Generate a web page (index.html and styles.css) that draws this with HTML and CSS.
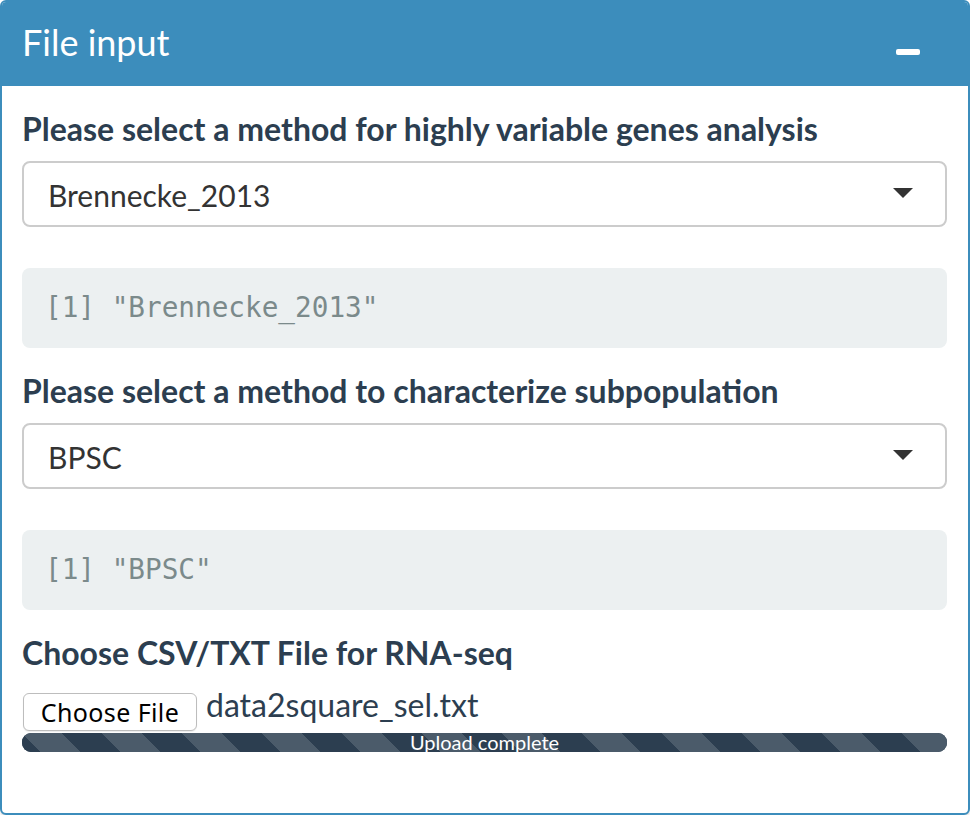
FILE: index.html
```html
<!DOCTYPE html>
<html lang="en">
<head>
<meta charset="utf-8">
<title>File input</title>
<link rel="stylesheet" href="styles.css">
</head>
<body>
<div class="box">
  <div class="box-header">
    <h3 class="box-title">File input</h3>
    <span class="collapse-btn" aria-label="collapse"></span>
  </div>
  <div class="box-body">
    <div class="form-group">
      <label class="control-label">Please select a method for highly variable genes analysis</label>
      <div class="select">
        <span class="select-value">Brennecke_2013</span>
        <span class="caret"></span>
      </div>
    </div>
    <pre class="output">[1] "Brennecke_2013"</pre>

    <div class="form-group">
      <label class="control-label">Please select a method to characterize subpopulation</label>
      <div class="select">
        <span class="select-value">BPSC</span>
        <span class="caret"></span>
      </div>
    </div>
    <pre class="output">[1] "BPSC"</pre>

    <div class="form-group file-group">
      <label class="control-label">Choose CSV/TXT File for RNA-seq</label>
      <div class="file-row">
        <span class="file-btn">Choose File</span>
        <span class="file-name">data2square_sel.txt</span>
      </div>
      <div class="progress">
        <div class="progress-bar">Upload complete</div>
      </div>
    </div>
  </div>
</div>
</body>
</html>
```

FILE: styles.css
```css
html, body {
  margin: 0;
  padding: 0;
  background: #ffffff;
}

body {
  font-family: Lato, "Open Sans", "Liberation Sans", sans-serif;
  color: #2c3e50;
}

.box {
  width: 970px;
  height: 815px;
  box-sizing: border-box;
  border: 2px solid #3c8dbc;
  border-radius: 6px;
  background: #ffffff;
  box-shadow: 0 2px 2px rgba(0, 0, 0, 0.12);
  overflow: hidden;
}

.box-header {
  display: flex;
  justify-content: space-between;
  align-items: flex-start;
  height: 84px;
  box-sizing: border-box;
  padding: 20px 48px 0 20px;
  background: #3c8dbc;
  color: #ffffff;
}

.box-title {
  margin: 0;
  font-size: 36px;
  font-weight: 400;
  line-height: 40px;
  color: #ffffff;
}

.collapse-btn {
  display: block;
  width: 24px;
  height: 6px;
  margin-top: 27px;
  border-radius: 2px;
  background: #ffffff;
}

.box-body {
  padding: 20px 21px 20px 20px;
}

.control-label {
  display: block;
  font-size: 32px;
  font-weight: 700;
  line-height: 43px;
  margin-top: 1px;
  color: #2c3e50;
}

.select {
  position: relative;
  height: 66px;
  box-sizing: border-box;
  margin-top: 11px;
  border: 2px solid #cccccc;
  border-radius: 8px;
  background: #ffffff;
  display: flex;
  align-items: center;
  padding: 0 24px;
}

.select-value {
  font-size: 30px;
  line-height: 34px;
  color: #333333;
  margin-top: 1px;
}

.caret {
  position: absolute;
  right: 32px;
  top: 25px;
  width: 0;
  height: 0;
  border-style: solid;
  border-width: 10px 10px 0 10px;
  border-color: #333333 transparent transparent transparent;
}

.output {
  margin: 41px 0 21px 0;
  height: 80px;
  box-sizing: border-box;
  padding: 0 23px;
  border-radius: 8px;
  background: #ecf0f1;
  color: #7b8a8b;
  font-family: "DejaVu Sans Mono", "Liberation Mono", monospace;
  font-size: 27.7px;
  line-height: 80px;
  white-space: pre;
}

.file-group {
  margin-top: 1px;
}

.file-group .control-label {
  margin-bottom: 13px;
}

.file-row {
  display: flex;
  align-items: flex-start;
  height: 44px;
}

.file-btn {
  display: flex;
  align-items: center;
  justify-content: center;
  box-sizing: border-box;
  width: 174px;
  height: 38px;
  margin: 6px 0 0 1px;
  border: 1px solid #bdbdbd;
  border-radius: 6px;
  background: #ffffff;
  box-shadow: 0 1px 1px rgba(0, 0, 0, 0.08);
  color: #000000;
  font-family: "Noto Sans", "Liberation Sans", sans-serif;
  font-size: 25px;
  letter-spacing: 0.4px;
  line-height: 30px;
}

.file-name {
  margin-left: 9px;
  font-size: 32px;
  line-height: 36px;
  color: #2c3e50;
}

.progress {
  margin-top: 2px;
  height: 19px;
  border-radius: 9px;
  background: #2c3e50;
}

.progress-bar {
  height: 19px;
  border-radius: 9px;
  background-color: #2c3e50;
  background-image: linear-gradient(45deg,
    rgba(255, 255, 255, 0.15) 25%, transparent 25%, transparent 50%,
    rgba(255, 255, 255, 0.15) 50%, rgba(255, 255, 255, 0.15) 75%,
    transparent 75%, transparent);
  background-size: 80px 80px;
  color: #ffffff;
  text-align: center;
  font-size: 20px;
  line-height: 19px;
}
```
